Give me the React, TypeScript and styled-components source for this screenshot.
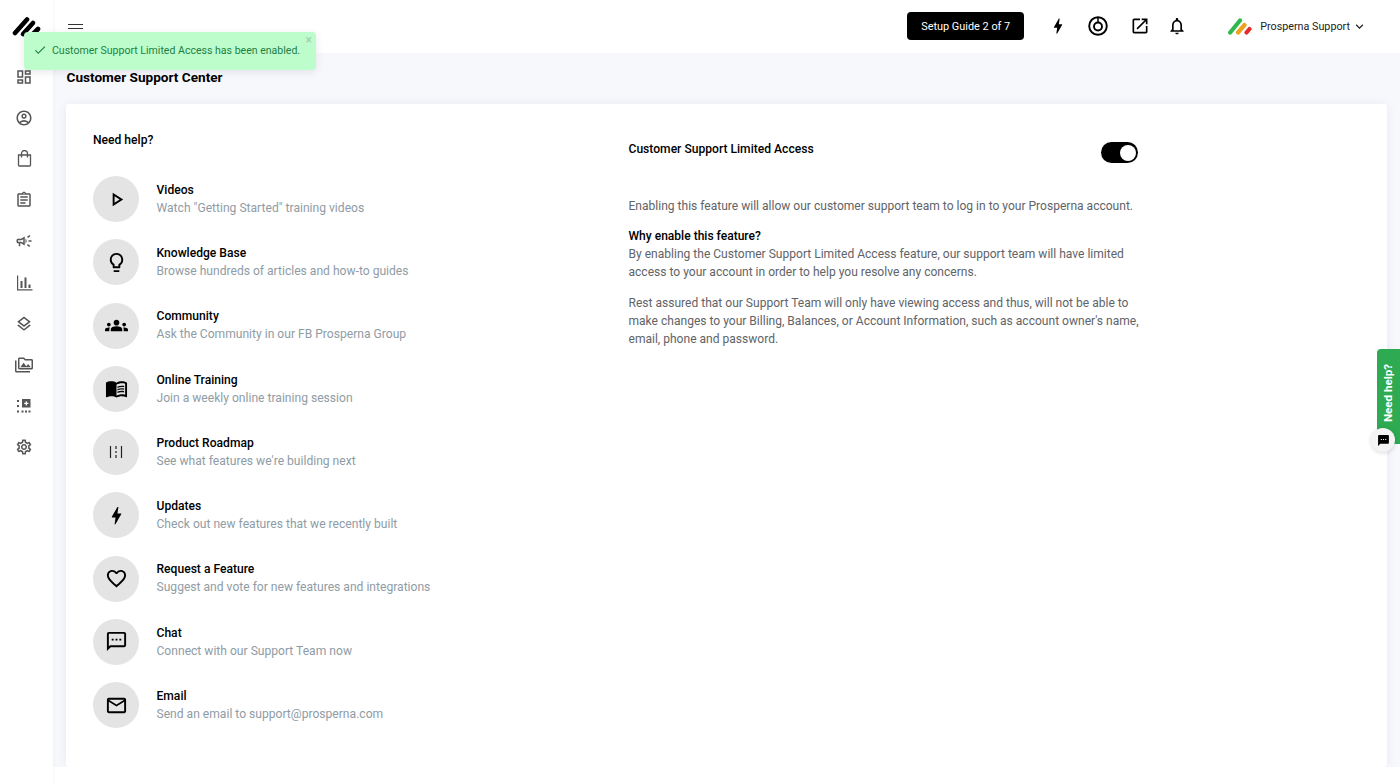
import React, { FunctionComponent, ReactNode } from 'react';
import styled, { createGlobalStyle } from 'styled-components';
import {
  MdBolt,
  MdCheck,
  MdFavoriteBorder,
  MdGroups,
  MdKeyboardArrowDown,
  MdMenuBook,
  MdOutlineAccountCircle,
  MdOutlineAssignment,
  MdOutlineCampaign,
  MdOutlineDashboard,
  MdOutlineLayers,
  MdOutlineLightbulb,
  MdOutlineMailOutline,
  MdOutlineNotifications,
  MdOutlineOpenInNew,
  MdOutlinePermMedia,
  MdOutlinePlayArrow,
  MdOutlineSettings,
  MdOutlineSms,
  MdSms,
} from 'react-icons/md';

const GlobalStyle = createGlobalStyle`
  html, body {
    margin: 0;
    height: 784px;
    overflow: hidden;
    background: #f7f8fc;
    font-family: Roboto, 'Liberation Sans', sans-serif;
  }
`;

const Page = styled.div`
  display: grid;
  grid-template-columns: 53px 1fr;
  height: 784px;
  position: relative;
`;

const Sidebar = styled.aside`
  background: #fff;
  display: flex;
  flex-direction: column;
  align-items: center;
  box-shadow: 1px 0 3px rgba(30, 40, 80, 0.04);
  z-index: 1;
`;

const LogoSlot = styled.div`
  height: 56px;
  width: 100%;
  display: flex;
  align-items: flex-start;
  padding: 16px 0 0 12px;
  box-sizing: border-box;
`;

const NavItem = styled.div`
  height: 41.2px;
  width: 100%;
  display: flex;
  align-items: center;
  justify-content: center;
  color: #555;
  font-size: 18px;
  padding-right: 5px;
  box-sizing: border-box;
`;

const Main = styled.div`
  display: flex;
  flex-direction: column;
  min-width: 0;
`;

const Header = styled.header`
  height: 53px;
  flex: none;
  background: #fff;
  display: flex;
  align-items: center;
  padding: 0 0 1px 15px;
  box-sizing: border-box;
`;

const MenuLines = styled.div`
  width: 15px;
  height: 8px;
  border-top: 1.5px solid #333;
  border-bottom: 1.5px solid #333;
  position: relative;
  margin-top: 5px;

  &::after {
    content: '';
    position: absolute;
    left: 0;
    right: 0;
    top: 3.25px;
    height: 1.5px;
    background: #333;
  }
`;

const HeaderRight = styled.div`
  margin-left: auto;
  display: flex;
  align-items: center;
`;

const SetupButton = styled.div`
  width: 117px;
  height: 28px;
  background: #000;
  color: #fff;
  border-radius: 4px;
  font-size: 10.9px;
  display: flex;
  align-items: center;
  justify-content: center;
`;

const HeaderIcon = styled.div<{ $left: number }>`
  margin-left: ${(p) => p.$left}px;
  width: 20px;
  display: flex;
  justify-content: center;
  color: #000;
  font-size: 20px;
`;

const Account = styled.div`
  margin-left: 41px;
  margin-right: 33px;
  display: flex;
  align-items: center;
  font-size: 10.75px;
  color: #222;
`;

const AccountName = styled.span`
  margin-left: 8px;
  margin-right: 2px;
`;

const Content = styled.div`
  flex: 1;
  padding: 0 13px;
  min-height: 0;
  display: flex;
  flex-direction: column;
`;

const PageTitle = styled.h1`
  margin: 0;
  height: 51px;
  display: flex;
  align-items: center;
  font-size: 13.6px;
  font-weight: 700;
  color: #000;
  padding: 0 0 4px 0.5px;
  box-sizing: border-box;
`;

const Card = styled.div`
  height: 663px;
  flex: none;
  background: #fff;
  border-radius: 3px;
  box-shadow: 0 0 12px rgba(30, 40, 80, 0.06);
  padding: 28px 27px 0;
  box-sizing: border-box;
  display: grid;
  grid-template-columns: 535px 510px;
`;

const FooterBar = styled.div`
  flex: 1;
  background: #fff;
  margin: 0 -13px;
`;

const SectionLabel = styled.div`
  font-size: 12.1px;
  font-weight: 500;
  color: #000;
  height: 16px;
  line-height: 16px;
  margin-bottom: 28px;
`;

const HelpList = styled.div`
  display: flex;
  flex-direction: column;
`;

const HelpRow = styled.div`
  height: 63.25px;
  display: flex;
  align-items: flex-start;
`;

const IconCircle = styled.div`
  width: 46px;
  height: 46px;
  border-radius: 50%;
  background: #e4e4e4;
  flex: none;
  display: flex;
  align-items: center;
  justify-content: center;
  color: #000;
  font-size: 23px;
`;

const HelpText = styled.div`
  margin-left: 17.5px;
  padding-top: 4.9px;
`;

const HelpTitle = styled.div`
  font-size: 12.1px;
  font-weight: 500;
  color: #000;
  line-height: 18px;
`;

const HelpSub = styled.div`
  font-size: 12.1px;
  color: #8f9ca5;
  line-height: 18px;
`;

const AccessColumn = styled.div`
  padding: 9px 0 0 0.5px;
`;

const AccessHead = styled.div`
  display: flex;
  justify-content: space-between;
  height: 55.5px;
`;

const Switch = styled.div`
  width: 37px;
  height: 21px;
  border-radius: 11px;
  background: #000;
  margin: 1px 0 0 0;
  position: relative;

  &::after {
    content: '';
    position: absolute;
    right: 2px;
    top: 2.5px;
    width: 16px;
    height: 16px;
    border-radius: 50%;
    background: #fff;
  }
`;

const Paragraph = styled.p`
  margin: 0 0 12.5px;
  font-size: 12.05px;
  line-height: 18px;
  color: #5f6468;
  white-space: nowrap;
`;

const Strong = styled.div`
  color: #000;
  font-weight: 500;
`;

const Toast = styled.div`
  position: absolute;
  left: 24px;
  top: 32px;
  width: 292px;
  height: 38px;
  background: #bdfdcc;
  border-radius: 4px;
  box-shadow: 0 2px 8px rgba(30, 40, 80, 0.1);
  color: #1c7f43;
  font-size: 10.55px;
  display: flex;
  align-items: center;
  padding: 0 0 2px 9px;
  box-sizing: border-box;
  z-index: 5;
`;

const ToastText = styled.span`
  margin-left: 5px;
  white-space: nowrap;
`;

const ToastClose = styled.span`
  position: absolute;
  right: 4px;
  top: 1px;
  font-size: 12px;
  color: #a3c9ad;
`;

const HelpTab = styled.div`
  position: absolute;
  right: 0;
  top: 349px;
  width: 23px;
  height: 95px;
  background: #2eaa52;
  border-radius: 4px 0 0 0;
  color: #fff;
  font-size: 11.6px;
  font-weight: 700;
  display: flex;
  align-items: center;
  justify-content: center;
  z-index: 5;
`;

const HelpTabLabel = styled.span`
  transform: rotate(-90deg);
  white-space: nowrap;
  margin-bottom: 8px;
`;

const ChatBubble = styled.div`
  position: absolute;
  right: 5px;
  top: 428px;
  width: 24px;
  height: 24px;
  border-radius: 50%;
  background: #f4f4f4;
  box-shadow: 0 1px 4px rgba(0, 0, 0, 0.15);
  display: flex;
  align-items: center;
  justify-content: center;
  color: #000;
  font-size: 13px;
  z-index: 6;
`;

const BrandMark: FunctionComponent = () => (
  <svg width="30" height="22" viewBox="0 0 30 22" stroke="#000" strokeWidth="4.6" strokeLinecap="round">
    <path d="M3 17 L15 3.5" />
    <path d="M11 18 L21 7" />
    <path d="M20 19 L26 13" />
  </svg>
);

const AccountMark: FunctionComponent = () => (
  <svg width="24" height="17" viewBox="0 0 24 17" fill="none" strokeWidth="4.2" strokeLinecap="round">
    <path d="M2.2 14.5 L12 2.5" stroke="#2fb84d" />
    <path d="M10 14.5 L16.5 7" stroke="#eda21f" />
    <path d="M18.5 14.5 L21.5 11" stroke="#e62a2a" />
  </svg>
);

const BagIcon: FunctionComponent = () => (
  <svg width="15" height="17" viewBox="0 0 15 17" fill="none" stroke="#555" strokeWidth="1.3">
    <path d="M1.5 5 H13.5 V15 Q13.5 16 12.5 16 H2.5 Q1.5 16 1.5 15 Z" />
    <path d="M4.5 7.5 V3.5 A3 3 0 0 1 10.5 3.5 V7.5" />
  </svg>
);

const ChartIcon: FunctionComponent = () => (
  <svg width="17" height="16" viewBox="0 0 17 16" fill="#555">
    <path d="M1 0.5 H2.2 V14.3 H16.5 V15.5 H1 Z" />
    <rect x="4.5" y="6" width="2" height="7" />
    <rect x="8.5" y="2.5" width="2" height="10.5" />
    <rect x="12.5" y="9.5" width="2" height="3.5" />
  </svg>
);

const AppsIcon: FunctionComponent = () => (
  <svg width="14" height="14" viewBox="0 0 14 14" fill="#555">
    <rect x="0" y="1" width="2" height="2" />
    <rect x="0" y="6" width="2" height="2" />
    <rect x="0" y="11.5" width="2" height="2" />
    <rect x="4.5" y="11.5" width="2" height="2" />
    <rect x="8" y="11.5" width="2" height="2" />
    <rect x="11.5" y="11.5" width="2" height="2" />
    <path d="M5 0 H13.5 V8.5 H5 Z M8.7 2.2 V3.7 H7.2 V4.9 H8.7 V6.4 H9.9 V4.9 H11.4 V3.7 H9.9 V2.2 Z" fillRule="evenodd" />
  </svg>
);

const RoadmapIcon: FunctionComponent = () => (
  <svg width="16" height="16" viewBox="0 0 16 16" stroke="#222" strokeWidth="1.2" fill="none">
    <path d="M2.5 2 V14" />
    <path d="M8 2 V5 M8 7 V9 M8 11 V14" />
    <path d="M13.5 2 V14" />
  </svg>
);

const TargetIcon: FunctionComponent = () => (
  <svg width="20" height="20" viewBox="0 0 20 20" fill="none" stroke="#000">
    <circle cx="10" cy="10" r="8.8" strokeWidth="1.9" />
    <circle cx="10" cy="10.5" r="4" strokeWidth="1.9" />
    <path d="M10 1.5 V6.5" strokeWidth="1.5" />
  </svg>
);

const navIcons: ReactNode[] = [
  <MdOutlineDashboard key="dashboard" />,
  <MdOutlineAccountCircle key="account" />,
  <BagIcon key="orders" />,
  <MdOutlineAssignment key="pages" />,
  <MdOutlineCampaign key="marketing" />,
  <ChartIcon key="reports" />,
  <MdOutlineLayers key="layers" />,
  <MdOutlinePermMedia key="media" />,
  <AppsIcon key="apps" />,
  <MdOutlineSettings key="settings" />,
];

const helpItems: { icon: ReactNode; title: string; sub: string }[] = [
  { icon: <MdOutlinePlayArrow />, title: 'Videos', sub: 'Watch "Getting Started" training videos' },
  { icon: <MdOutlineLightbulb />, title: 'Knowledge Base', sub: 'Browse hundreds of articles and how-to guides' },
  { icon: <MdGroups />, title: 'Community', sub: 'Ask the Community in our FB Prosperna Group' },
  { icon: <MdMenuBook />, title: 'Online Training', sub: 'Join a weekly online training session' },
  { icon: <RoadmapIcon />, title: 'Product Roadmap', sub: "See what features we're building next" },
  { icon: <MdBolt />, title: 'Updates', sub: 'Check out new features that we recently built' },
  { icon: <MdFavoriteBorder />, title: 'Request a Feature', sub: 'Suggest and vote for new features and integrations' },
  { icon: <MdOutlineSms />, title: 'Chat', sub: 'Connect with our Support Team now' },
  { icon: <MdOutlineMailOutline />, title: 'Email', sub: 'Send an email to support@prosperna.com' },
];

const App: FunctionComponent = () => (
  <Page>
    <GlobalStyle />
    <Sidebar>
      <LogoSlot>
        <BrandMark />
      </LogoSlot>
      {navIcons.map((icon, i) => (
        <NavItem key={i}>{icon}</NavItem>
      ))}
    </Sidebar>
    <Main>
      <Header>
        <MenuLines />
        <HeaderRight>
          <SetupButton>Setup Guide 2 of 7</SetupButton>
          <HeaderIcon $left={24}>
            <MdBolt />
          </HeaderIcon>
          <HeaderIcon $left={20}>
            <TargetIcon />
          </HeaderIcon>
          <HeaderIcon $left={22}>
            <MdOutlineOpenInNew />
          </HeaderIcon>
          <HeaderIcon $left={17}>
            <MdOutlineNotifications />
          </HeaderIcon>
          <Account>
            <AccountMark />
            <AccountName>Prosperna Support</AccountName>
            <MdKeyboardArrowDown size={15} />
          </Account>
        </HeaderRight>
      </Header>
      <Content>
        <PageTitle>Customer Support Center</PageTitle>
        <Card>
          <div>
            <SectionLabel>Need help?</SectionLabel>
            <HelpList>
              {helpItems.map((item) => (
                <HelpRow key={item.title}>
                  <IconCircle>{item.icon}</IconCircle>
                  <HelpText>
                    <HelpTitle>{item.title}</HelpTitle>
                    <HelpSub>{item.sub}</HelpSub>
                  </HelpText>
                </HelpRow>
              ))}
            </HelpList>
          </div>
          <AccessColumn>
            <AccessHead>
              <SectionLabel>Customer Support Limited Access</SectionLabel>
              <Switch />
            </AccessHead>
            <Paragraph>Enabling this feature will allow our customer support team to log in to your Prosperna account.</Paragraph>
            <Paragraph>
              <Strong>Why enable this feature?</Strong>
              By enabling the Customer Support Limited Access feature, our support team will have limited
              <br />
              access to your account in order to help you resolve any concerns.
            </Paragraph>
            <Paragraph>
              Rest assured that our Support Team will only have viewing access and thus, will not be able to
              <br />
              make changes to your Billing, Balances, or Account Information, such as account owner's name,
              <br />
              email, phone and password.
            </Paragraph>
          </AccessColumn>
        </Card>
        <FooterBar />
      </Content>
    </Main>
    <Toast>
      <MdCheck size={14} />
      <ToastText>Customer Support Limited Access has been enabled.</ToastText>
      <ToastClose>×</ToastClose>
    </Toast>
    <HelpTab>
      <HelpTabLabel>Need help?</HelpTabLabel>
    </HelpTab>
    <ChatBubble>
      <MdSms />
    </ChatBubble>
  </Page>
);

export default App;
